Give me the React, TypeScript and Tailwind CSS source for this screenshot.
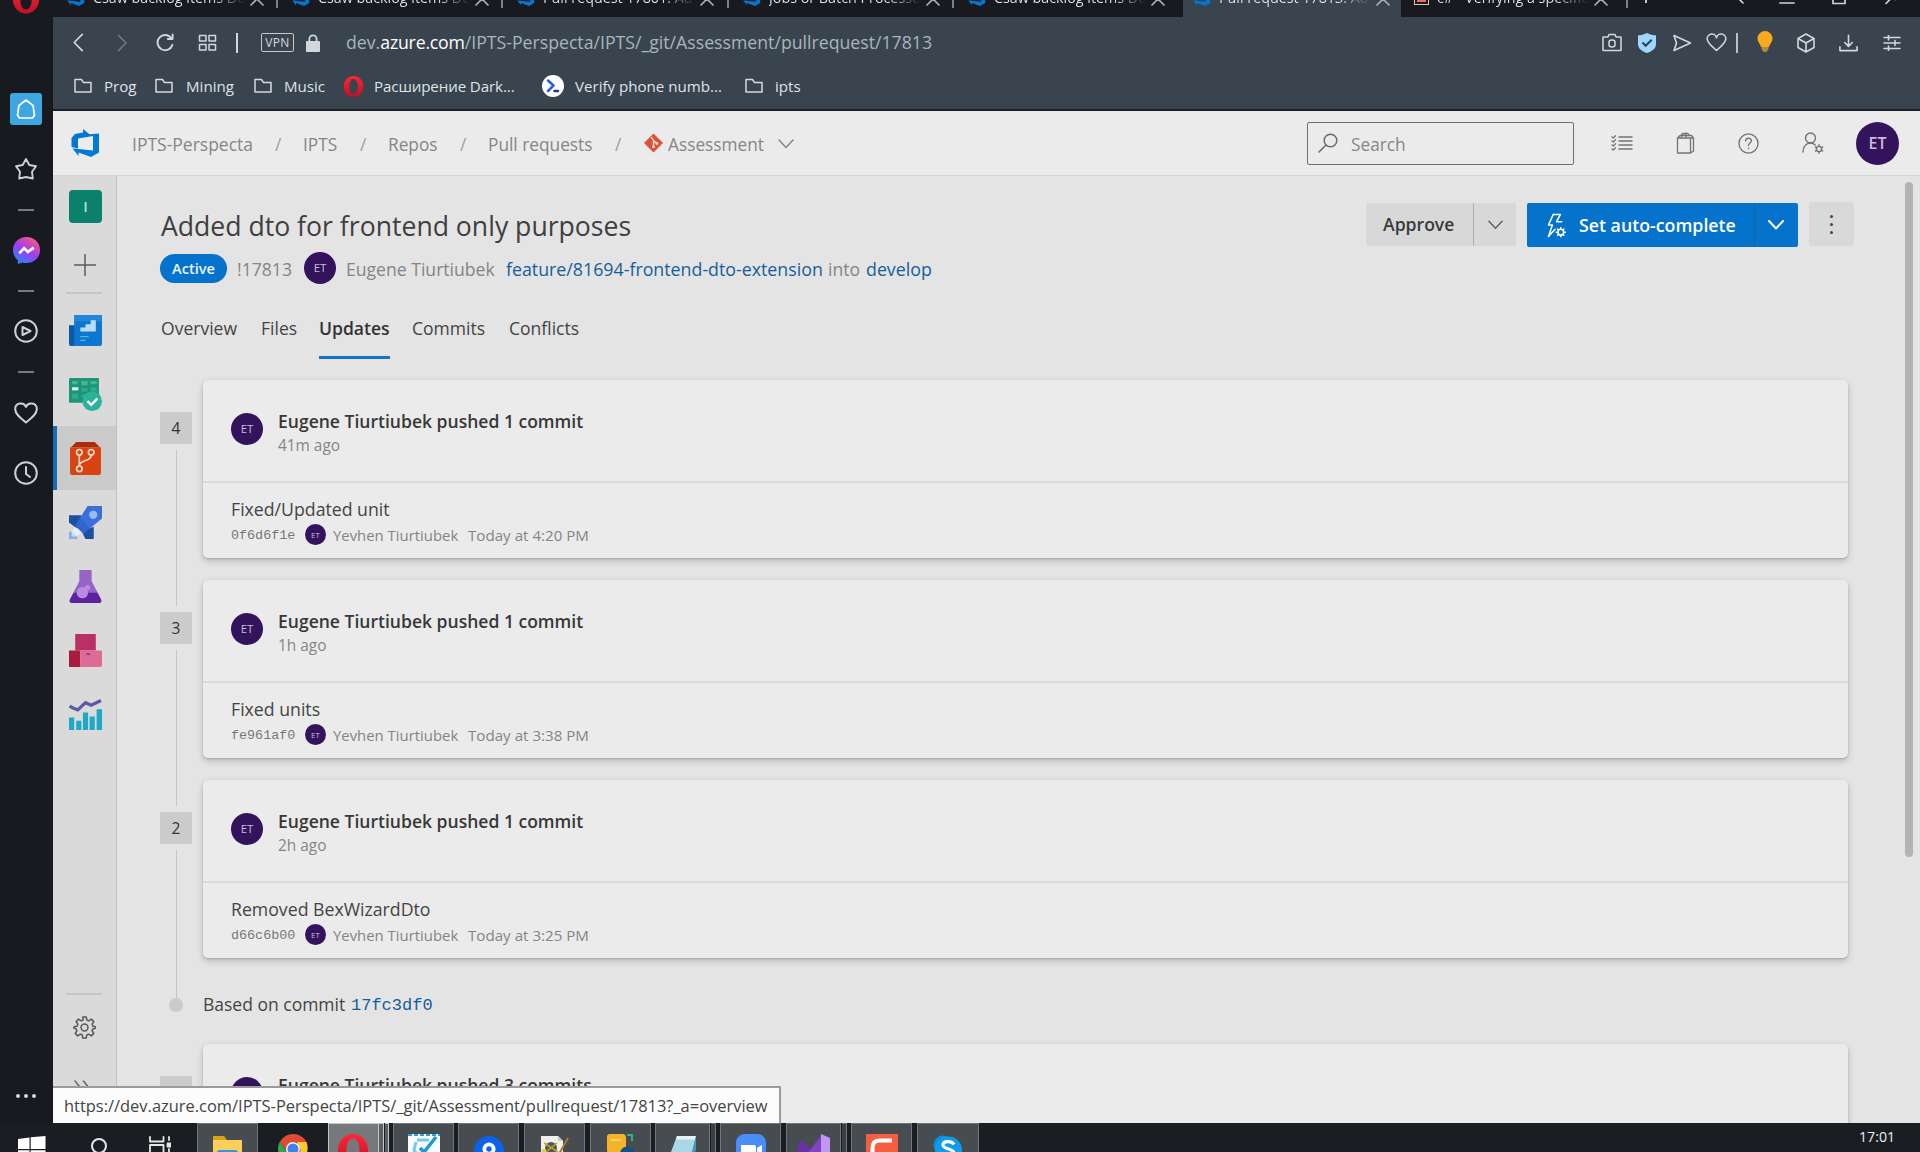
import type { ReactNode } from "react";

type IconProps = { className?: string };

const line = {
  fill: "none",
  stroke: "currentColor",
  strokeLinecap: "round" as const,
  strokeLinejoin: "round" as const,
};

function DevOpsLogo({ className = "" }: IconProps) {
  return (
    <svg viewBox="0 0 28 28" className={className}>
      <path
        fill="#0078d4"
        fillRule="evenodd"
        d="M27.5 4.5v19L19.500 28 7 23.500V27L1 19.500 4.500 19.800 21.500 21.500V7L6.500 9.500v10L0 18V9l3.500-4L11.500 3.500V0L18 5.200z"
      />
    </svg>
  );
}

function OperaRing({ className = "" }: IconProps) {
  return (
    <svg viewBox="0 0 32 32" className={className}>
      <defs>
        <linearGradient id="operaRed" x1="0" y1="0" x2="0" y2="1">
          <stop offset="0" stopColor="#ff2638" />
          <stop offset="1" stopColor="#c01024" />
        </linearGradient>
      </defs>
      <path
        fill="url(#operaRed)"
        fillRule="evenodd"
        d="M16 0c8.500 0 15 7 15 16s-6.500 16-15 16S1 25 1 16 7.500 0 16 0zm0 4.500c-4 0-6.500 5-6.500 11.500S12 27.500 16 27.500s6.500-5 6.500-11.500S20 4.500 16 4.500z"
      />
    </svg>
  );
}

function Chevron({ className = "", w = 1.5 }: IconProps & { w?: number }) {
  return (
    <svg viewBox="0 0 16 10" className={className} {...line} strokeWidth={w}>
      <path d="M1 1l7 7.500L15 1" />
    </svg>
  );
}

function Folder() {
  return (
    <svg viewBox="0 0 18 16" className="h-4 w-[18px] text-[#d5dade]" {...line} strokeWidth="1.500">
      <path d="M1 2.200V14h16V4.600H9.500L7.500 1.500H1z" />
    </svg>
  );
}

function Avatar({ className }: { className: string }) {
  return (
    <div className={`flex shrink-0 items-center justify-center rounded-full bg-[#33135c] text-[#c9bcd6] ${className}`}>
      ET
    </div>
  );
}

function CloseX() {
  return (
    <svg viewBox="0 0 14 14" className="h-[14px] w-[14px] shrink-0 text-[#aab0b6]" {...line} strokeWidth="1.700">
      <path d="M1 1l12 12M13 1L1 13" />
    </svg>
  );
}

const tabs = [
  { text: "Csaw backlog items De", kind: "devops", w: "w-[225px]" },
  { text: "Csaw backlog items De", kind: "devops", w: "w-[225px]" },
  { text: "Pull request 17801: Ad", kind: "devops", w: "w-[226px]" },
  { text: "Jobs or Batch Processe", kind: "devops", w: "w-[225px]" },
  { text: "Csaw backlog items De", kind: "devops", w: "w-[229px]" },
  { text: "Pull request 17813: Ad", kind: "active", w: "w-[218px]" },
  { text: "c# - Verifying a specific", kind: "stack", w: "w-[227px]" },
];

function TabStrip() {
  return (
    <div className="flex h-[17px] overflow-hidden bg-[#181a1f]">
      {tabs.map((t, i) => (
        <div key={i} className={`flex h-[17px] shrink-0 ${t.w} ${t.kind === "active" ? "bg-[#39444f] pl-[9px]" : "pl-[13px]"}`}>
          <div className="-mt-[12px] flex h-[22px] flex-1 items-start">
            {t.kind === "stack" ? (
              <div className="mt-[3px] flex h-[14px] w-[15px] flex-col justify-end gap-[2px] border border-t-0 border-[#d8c8b8] p-[2px]">
                <span className="h-[2px] bg-[#e2725b]" />
                <span className="h-[2px] bg-[#e2725b]" />
              </div>
            ) : (
              <DevOpsLogo className="h-[18px] w-[19px]" />
            )}
            <div className="ml-[8px] w-[152px] overflow-hidden bg-gradient-to-r from-[#e3e6e9] from-78% to-transparent bg-clip-text text-[14.300px] leading-[20px] font-medium whitespace-nowrap text-transparent">
              {t.text}
            </div>
            <div className="mt-[4px] ml-[5px]">
              <CloseX />
            </div>
          </div>
          {t.kind !== "active" && i !== 4 && <div className="h-[8px] w-[2px] bg-[#7d8287]" />}
        </div>
      ))}
      <div className="ml-[17px] h-[3px] w-[2px] bg-[#c4c8cc]" />
      <svg viewBox="0 0 160 17" className="ml-[89px] h-[17px] w-[160px] text-[#d0d4d8]" {...line} strokeWidth="1.700">
        <path d="M1 -3l6 6" />
        <path d="M44 3h14" />
        <path d="M97 -8v11.500h12V-8" />
        <path d="M150 3.500l7-7l7 7" />
      </svg>
    </div>
  );
}

function AddressBar() {
  return (
    <div className="flex h-[51px] items-center pl-[19px] text-[#d2d7db]">
      <svg viewBox="0 0 12 20" className="h-[19px] w-[12px]" {...line} strokeWidth="1.800">
        <path d="M10.500 1.500L2 10l8.500 8.500" />
      </svg>
      <svg viewBox="0 0 12 20" className="ml-[33px] h-[18px] w-[11px] text-[#6c7782]" {...line} strokeWidth="1.800">
        <path d="M1.500 1.500L10 10l-8.500 8.500" />
      </svg>
      <svg viewBox="0 0 20 20" className="ml-[27px] h-[19px] w-[20px]" {...line} strokeWidth="2">
        <path d="M17.800 12.500A8 8 0 1 1 16.500 5.200" />
        <path d="M18 1.500v4.800h-5" />
      </svg>
      <svg viewBox="0 0 18 17" className="ml-[23px] h-[17px] w-[19px]" {...line} strokeWidth="1.500">
        <path d="M1 1.500h6.500v5.500H1zM10.500 1.500H17v5.500h-6.500zM1 10.500h6.500V16H1zM10.500 10.500H17V16h-6.500z" />
      </svg>
      <div className="ml-[19px] h-[20px] w-[2px] bg-[#d2d7db]" />
      <div className="ml-[23px] flex h-[19px] w-[33px] items-center justify-center rounded-[2px] border-[1.500px] border-[#c3c9ce] text-[12px] leading-none tracking-[0.3px]">
        VPN
      </div>
      <svg viewBox="0 0 14 18" className="ml-[12px] h-[18px] w-[14px]" fill="currentColor">
        <path fillRule="evenodd" d="M2.500 7V5a4.500 4.500 0 0 1 9 0v2H13a1 1 0 0 1 1 1v9a1 1 0 0 1-1 1H1a1 1 0 0 1-1-1V8a1 1 0 0 1 1-1zM4.300 7h5.400V5a2.700 2.700 0 0 0-5.400 0z" />
      </svg>
      <div className="ml-[26px] flex-1 text-[17.700px] whitespace-nowrap text-[#aab4bd]">
        dev.<span className="tracking-[-0.200px] text-white">azure.com</span>/IPTS-Perspecta/IPTS/_git/Assessment/pullrequest/17813
      </div>
      <svg viewBox="0 0 20 18" className="h-[19px] w-[20px]" {...line} strokeWidth="1.500">
        <path d="M1 3.500h5L7 1h6l1 2.500h5V17H1z" />
        <rect x="7" y="6.500" width="6" height="7" rx="2.500" />
      </svg>
      <svg viewBox="0 0 18 20" className="ml-[16px] h-[20px] w-[18px]">
        <path fill="#9fd6fb" d="M9 0c3 1.800 6 2.200 9 2.300V11c0 5-4.500 7.500-9 9-4.500-1.500-9-4-9-9V2.300C3 2.200 6 1.800 9 0z" />
        <path d="M4.500 9.500l3.200 3.300 6-6" fill="none" stroke="#24445c" strokeWidth="2" />
      </svg>
      <svg viewBox="0 0 20 18" className="ml-[16px] h-[18px] w-[20px]" {...line} strokeWidth="1.600">
        <path d="M2 1.500L18.500 9 2 16.500 4.500 9z" />
      </svg>
      <svg viewBox="0 0 21 19" className="ml-[14px] h-[19px] w-[21px]" {...line} strokeWidth="1.600">
        <path d="M10.500 17.500C4 12 1.200 9 1.200 6a4.700 4.700 0 0 1 9.300-1.200A4.700 4.700 0 0 1 19.800 6c0 3-2.800 6-9.300 11.500z" />
      </svg>
      <div className="ml-[9px] h-[20px] w-[2px] bg-[#b9c0c6]" />
      <svg viewBox="0 0 16 21" className="-mt-[3px] ml-[19px] h-[21px] w-[16px]">
        <path fill="#f6aa1c" d="M8 0a7.500 7.500 0 0 1 7.500 7.500c0 3.500-2.500 5-3.500 8.500H4C3 12.500.5 11 .5 7.500A7.500 7.500 0 0 1 8 0z" />
        <path fill="#a98c4a" d="M4.500 16h7v2l-2 3h-3l-2-3z" />
      </svg>
      <svg viewBox="0 0 20 20" className="ml-[23px] h-[20px] w-[20px]" {...line} strokeWidth="1.600">
        <path d="M10 1l8 4.500v9L10 19l-8-4.500v-9zM2 5.500l8 4.500 8-4.500M10 10v9" />
      </svg>
      <svg viewBox="0 0 20 18" className="ml-[23px] h-[18px] w-[19px]" {...line} strokeWidth="1.700">
        <path d="M10 1v11M6 8.500l4 4 4-4M1 13v4h18v-4" />
      </svg>
      <svg viewBox="0 0 18 16" className="mr-[19px] ml-[25px] h-[16px] w-[18px]" {...line} strokeWidth="1.600">
        <path d="M1 2.500h16M1 8h16M1 13.500h16M5.500 0v5M12 5.500v5M5.500 11v5" />
      </svg>
    </div>
  );
}

function Bookmarks() {
  return (
    <div className="-mt-[2px] flex h-[40px] items-center pl-[21px] text-[15.100px] whitespace-nowrap text-[#dfe3e6]">
      <Folder />
      <span className="ml-[12px] w-[51px]">Prog</span>
      <Folder />
      <span className="ml-[13px] w-[68px]">Mining</span>
      <Folder />
      <span className="ml-[12px] w-[58px]">Music</span>
      <OperaRing className="h-[21px] w-[23px]" />
      <span className="ml-[9px] w-[168px] tracking-[-0.100px]">Расширение Dark...</span>
      <span className="flex h-[22px] w-[22px] items-center justify-center rounded-full bg-white">
        <svg viewBox="0 0 14 14" className="h-[14px] w-[14px]" {...line} strokeWidth="2.500">
          <path d="M2 1.500l5.500 5L2 12" stroke="#2a5fe0" />
          <path d="M8.500 12H12" stroke="#173b9c" />
        </svg>
      </span>
      <span className="ml-[11px] w-[170px]">Verify phone numb...</span>
      <Folder />
      <span className="ml-[12px]">ipts</span>
    </div>
  );
}

function OperaSidebar() {
  const dash = <div className="h-[2px] w-[16px] bg-[#777b80]" />;
  return (
    <aside className="flex w-[53px] shrink-0 flex-col items-center overflow-hidden bg-[#171a1f] pr-[1px] text-[#cdd1d5]">
      <div className="-mt-[17px] h-[33px] shrink-0">
        <OperaRing className="h-[33px] w-[28px]" />
      </div>
      <div className="mt-[77px] flex h-[32px] w-[32px] items-center justify-center rounded-[3px] bg-[#3ea6e2]">
        <svg viewBox="0 0 20 20" className="h-[20px] w-[20px] text-white" {...line} strokeWidth="1.700">
          <path d="M10 1l7 5.500 1.500 9.500-2 3h-13l-2-3L3 6.500z" />
        </svg>
      </div>
      <svg viewBox="0 0 24 24" className="mt-[32px] h-[24px] w-[24px]" {...line} strokeWidth="1.900">
        <path d="M12 2l3.300 6 6.700 1.200-4 5.500.8 6.800L12 20l-6.800 1.500.8-6.800-4-5.500L8.700 8z" />
      </svg>
      <div className="mt-[28px]">{dash}</div>
      <svg viewBox="0 0 28 28" className="mt-[26px] h-[27px] w-[27px]">
        <defs>
          <linearGradient id="msg" x1="0.200" y1="1" x2="0.800" y2="0">
            <stop offset="0" stopColor="#1c8bff" />
            <stop offset="0.500" stopColor="#a23cf0" />
            <stop offset="1" stopColor="#ff5c78" />
          </linearGradient>
        </defs>
        <path fill="url(#msg)" d="M14 0c8 0 14 5.800 14 13.500S22 27 14 27c-1.400 0-2.800-.2-4-.6L5 28v-4C2 21.500 0 18 0 13.500 0 5.800 6 0 14 0z" />
        <path d="M6.500 17l5-5.500 4 4 6-4.500" fill="none" stroke="#fff" strokeWidth="2.800" />
      </svg>
      <div className="mt-[26px]">{dash}</div>
      <svg viewBox="0 0 24 24" className="mt-[27px] h-[24px] w-[24px]" {...line} strokeWidth="2">
        <circle cx="12" cy="12" r="10.800" />
        <path d="M8.500 8l8 4-8 4z" />
      </svg>
      <div className="mt-[28px]">{dash}</div>
      <svg viewBox="0 0 24 22" className="mt-[29px] h-[22px] w-[24px]" {...line} strokeWidth="2">
        <path d="M12 20.500C5 15 1.200 11.500 1.200 7.200A5.600 5.600 0 0 1 12 5a5.600 5.600 0 0 1 10.800 2.200c0 4.300-3.800 7.800-10.800 13.300z" />
      </svg>
      <svg viewBox="0 0 24 24" className="mt-[37px] h-[24px] w-[24px]" {...line} strokeWidth="2">
        <circle cx="12" cy="12" r="10.800" />
        <path d="M12 6v7l4 3" />
      </svg>
      <div className="mt-[609px] flex gap-[4px]">
        <i className="h-[4px] w-[4px] rounded-full bg-[#d4d8dc]" />
        <i className="h-[4px] w-[4px] rounded-full bg-[#d4d8dc]" />
        <i className="h-[4px] w-[4px] rounded-full bg-[#d4d8dc]" />
      </div>
    </aside>
  );
}

function AzureHeader() {
  return (
    <header className="flex h-[65px] shrink-0 items-center border-b border-[#d4d4d4] bg-[#ebebeb] pl-[18px] text-[17.300px] whitespace-nowrap text-[#868686]">
      <DevOpsLogo className="h-[28px] w-[29px]" />
      <div className="mt-[3px] ml-[32px] flex items-center">
        <span className="w-[143px] text-[17.500px]">IPTS-Perspecta</span>
        <span className="w-[28px] text-[#a0a0a0]">/</span>
        <span className="w-[57px]">IPTS</span>
        <span className="w-[28px] text-[#a0a0a0]">/</span>
        <span className="w-[72px]">Repos</span>
        <span className="w-[28px] text-[#a0a0a0]">/</span>
        <span className="w-[127px]">Pull requests</span>
        <span className="w-[29px] text-[#a0a0a0]">/</span>
        <svg viewBox="0 0 20 20" className="mb-[3px] h-[20px] w-[19px]">
          <path d="M10 0.500L19.500 10 10 19.500.5 10z" fill="#dd5136" stroke="#dd5136" strokeLinejoin="round" />
          <path d="M7.500 4l2.500 3v7.500M10 7.500l3.500 3" fill="none" stroke="#f6e4df" strokeWidth="1.400" />
          <circle cx="10" cy="14" r="1.500" fill="#f6e4df" />
          <circle cx="13.500" cy="10.500" r="1.500" fill="#f6e4df" />
        </svg>
        <span className="ml-[5px] w-[110px]">Assessment</span>
        <Chevron className="-mt-[2px] h-[10px] w-[16px]" />
      </div>
      <div className="ml-auto flex h-[43px] w-[267px] items-center rounded-[2px] border-[1.500px] border-[#707070] pl-[10px]">
        <svg viewBox="0 0 20 20" className="h-[20px] w-[20px] text-[#6a6a6a]" {...line} strokeWidth="1.500">
          <circle cx="12.500" cy="7.500" r="6.300" />
          <path d="M8 12l-7 7" />
        </svg>
        <span className="mt-[3px] ml-[13px]">Search</span>
      </div>
      <svg viewBox="0 0 22 16" className="ml-[37px] h-[16px] w-[22px] text-[#747474]" {...line} strokeWidth="1.400">
        <path d="M8 2h13M8 6h13M8 10h13M8 14h13M1 2l1.300 1L4.500.8M1 6l1.300 1 2.200-2.200M1 10l1.300 1 2.200-2.200M1 14l1.300 1 2.200-2.200" />
      </svg>
      <svg viewBox="0 0 18 22" className="ml-[43px] h-[22px] w-[19px] text-[#747474]" {...line} strokeWidth="1.300">
        <path d="M1 6h13v15H1zM1 6l2.500-2.500H15l2 2.500v13l-3 2M14 6h3M5 6V3c0-2 4.500-2 4.500 0v3M8 1.600c2-.8 4.500-.2 4.500 1.900" />
      </svg>
      <svg viewBox="0 0 22 22" className="ml-[43px] h-[21px] w-[21px] text-[#747474]" {...line} strokeWidth="1.400">
        <circle cx="11" cy="11" r="10" />
        <path d="M8 8.500c0-4 6-4 6-.3 0 2.300-3 2.500-3 5M11 15.800v.4" />
      </svg>
      <svg viewBox="0 0 22 22" className="ml-[43px] h-[22px] w-[22px] text-[#747474]" {...line} strokeWidth="1.400">
        <circle cx="8.500" cy="6" r="5" />
        <path d="M1 20c0-5 3-9 7.500-9 2 0 3.500.8 4.700 2" />
        <circle cx="17" cy="17" r="2.600" />
        <path d="M17 12.800v1.400M17 19.800v1.400M13.300 15l1.300.7M19.500 18.300l1.300.7M13.300 19l1.300-.7M19.500 15.700l1.300-.7" />
      </svg>
      <Avatar className="mr-[21px] ml-[32px] h-[43px] w-[43px] text-[16px] font-semibold" />
    </header>
  );
}

function NavSlot({ active, children }: { active?: boolean; children: ReactNode }) {
  return (
    <div className={`flex h-[64px] w-full shrink-0 items-center border-l-4 pl-[12px] ${active ? "border-[#0f6fbd] bg-[#cacaca]" : "border-transparent"}`}>
      {children}
    </div>
  );
}

function AzureNav() {
  const s = "h-[33px] w-[33px]";
  return (
    <nav className="flex w-[64px] shrink-0 flex-col border-r border-[#c2c2c2] bg-[#dadada]">
      <div className="mt-[14px] ml-[16px] flex h-[33px] w-[33px] shrink-0 items-center justify-center rounded-[4px] bg-[#0b806b] text-[15px] font-semibold text-[#b8dcd4]">
        I
      </div>
      <svg viewBox="0 0 22 22" className="mt-[31px] ml-[21px] h-[22px] w-[22px] shrink-0 text-[#5c5c5c]" {...line} strokeWidth="1.500">
        <path d="M11 0v22M0 11h22" />
      </svg>
      <div className="mt-[16px] mb-[4px] ml-[13px] h-[2px] w-[36px] shrink-0 bg-[#c6c6c6]" />
      <NavSlot>
        <svg viewBox="0 0 32 32" className={s}>
          <path fill="#0c5aa6" d="M0 11h8v20H2a2 2 0 0 1-2-2z" />
          <path fill="#0f76ce" d="M5 1h27v28a2 2 0 0 1-2 2H3c2 0 2-1 2-3z" />
          <path fill="#2c93e6" d="M5 1h27v6H5z" opacity=".6" />
          <path fill="#b9dcf5" d="M11 17v-4h5v-3h5V6h5v11z" />
          <path stroke="#5fb0ec" strokeWidth="1.300" d="M11 22h8M11 25.500h5" />
        </svg>
      </NavSlot>
      <NavSlot>
        <svg viewBox="0 0 32 32" className={s}>
          <path fill="#1e9579" d="M1 0h28v24H1a1 1 0 0 1-1-1V1z" />
          <path fill="#6fd3b8" d="M3 3h5v3H3zM12 3h6v4h-6zM21 3h6v3h-6z" opacity=".5" />
          <path fill="#e5f7f2" d="M3 9h6v3H3z" />
          <path fill="#36b796" d="M12 10h6v3h-6zM21 9h6v4h-6zM3 15h6v5H3zM12 16h5v3h-5z" opacity=".7" />
          <circle cx="22.500" cy="22.500" r="9.500" fill="#2cb39c" />
          <path d="M18 22.500l3.500 3.500 6-6" fill="none" stroke="#fff" strokeWidth="2.300" />
        </svg>
      </NavSlot>
      <NavSlot active>
        <svg viewBox="0 0 32 32" className={s}>
          <path fill="#a92d0b" d="M7 0h18l5 5H2z" />
          <path fill="#d8430f" d="M1 5h30v25a2 2 0 0 1-2 2H3a2 2 0 0 1-2-2z" />
          <g fill="none" stroke="#f8ddd2" strokeWidth="1.600">
            <circle cx="10" cy="10" r="2.700" />
            <circle cx="21.500" cy="10" r="2.700" />
            <circle cx="10" cy="26" r="2.700" />
            <path d="M10 13v10M21.500 13c0 6-11 4-11.500 10" />
          </g>
        </svg>
      </NavSlot>
      <NavSlot>
        <svg viewBox="0 0 32 32" className={s}>
          <path fill="#1d4fa3" d="M0 9h12l-4 13-8-6zM12 24l12-4v12h-8z" />
          <path fill="#3b6fdb" d="M18 0h14v12L14 27l-8-8z" />
          <path fill="#2d5ecb" d="M6 19l8 8 6-5L11 11z" opacity=".6" />
          <circle cx="23.500" cy="8.500" r="4" fill="#9fb9f2" />
          <path fill="#e6effc" d="M6 20l6 6-4 3-5-4z" />
          <path fill="#86aef0" d="M0 25h2.500v4.500H8V32H0z" />
        </svg>
      </NavSlot>
      <NavSlot>
        <svg viewBox="0 0 32 32" className={s}>
          <path fill="#9465c6" d="M10 0h12v11l9 17c1 2 0 4-2 4H3c-2 0-3-2-2-4l9-17z" />
          <path fill="#5c23a0" d="M4.500 22h23L31 28.500c1 2 0 3.500-2 3.500H3c-2 0-3-1.500-2-3.500z" />
          <circle cx="13" cy="22" r="5.500" fill="#b98be0" />
          <circle cx="18" cy="17" r="2.500" fill="#b98be0" />
        </svg>
      </NavSlot>
      <NavSlot>
        <svg viewBox="0 0 32 32" className={s}>
          <path fill="#bb3064" d="M6 0h20v16H6z" />
          <path fill="#a81c3d" d="M0 16h11v16H1a1 1 0 0 1-1-1z" />
          <path fill="#dd6b98" d="M11 16h20a1 1 0 0 1 1 1v13a2 2 0 0 1-2 2H11z" />
          <path fill="#a33a68" d="M17 18.500h3.500v2H17z" />
        </svg>
      </NavSlot>
      <NavSlot>
        <svg viewBox="0 0 32 32" className={s}>
          <path d="M0.500 8l4 2 4 1.500L16 4.500l5.500 2.500L31 2.500" fill="none" stroke="#5b5aa5" strokeWidth="3.200" />
          <path fill="#1fa9c6" d="M0 19h5v12H0zM7 22h5v9H7zM13.500 14h5v17h-5zM20 18h5v13h-5zM26.800 11H32v20h-5.200z" />
        </svg>
      </NavSlot>
      <div className="mt-[247px] ml-[13px] h-[2px] w-[36px] shrink-0 bg-[#c6c6c6]" />
      <svg viewBox="0 0 24 24" className="mt-[21px] ml-[20px] h-[23px] w-[23px] shrink-0 text-[#5a5a5a]" {...line} strokeWidth="1.600">
        <circle cx="12" cy="12" r="3.600" />
        <path d="M10.200 1h3.600l.6 3.200 2 .9 2.700-1.800 2.600 2.600-1.800 2.700.9 2 3.200.6v1.600l-3.200.6-.9 2 1.800 2.700-2.600 2.600-2.700-1.800-2 .9-.6 3.200h-3.600l-.6-3.200-2-.9-2.700 1.800-2.600-2.600 1.800-2.700-.9-2L1 12.800v-1.600l3.200-.6.9-2-1.800-2.700 2.600-2.600 2.700 1.800 2-.9z" />
      </svg>
      <svg viewBox="0 0 17 17" className="mt-[41px] ml-[21px] h-[17px] w-[17px] shrink-0 text-[#6a6a6a]" {...line} strokeWidth="1.600">
        <path d="M1 1l6 7.500L1 16M9.500 1l6 7.500-6 7.500" />
      </svg>
    </nav>
  );
}

function Update({ n, title, ago, msg, hash, time }: { n?: string; title: string; ago?: string; msg?: string; hash?: string; time?: string }) {
  return (
    <div className="flex h-[200px] shrink-0">
      <div className="flex w-[43px] shrink-0 flex-col pt-[32px]">
        <div className="flex h-[32px] w-[32px] shrink-0 items-center justify-center rounded-[2px] bg-[#cbcbcb] pt-px text-[15.500px] text-[#333]">{n}</div>
        {msg && <div className="mt-[6px] ml-[16px] h-[156px] w-px shrink-0 bg-[#c6c6c6]" />}
      </div>
      <section className="h-[178px] w-[1645px] rounded-[5px] bg-[#ebebeb] shadow-[0_3px_7px_rgba(0,0,0,0.19),0_1px_2px_rgba(0,0,0,0.14)]">
        <div className="flex h-[103px] border-b-2 border-[#dadada] pt-[28px] pl-[28px]">
          <Avatar className="mt-[5px] h-[32px] w-[32px] text-[11.500px]" />
          <div className="ml-[15px]">
            <div className="h-[27px] text-[17.550px] leading-[27px] font-semibold text-[#383838]">{title}</div>
            <div className="h-[21px] text-[15.400px] leading-[21px] text-[#858585]">{ago}</div>
          </div>
        </div>
        {msg && (
          <div className="pt-[13px] pl-[28px]">
            <div className="h-[27px] text-[17.700px] leading-[27px] text-[#444]">{msg}</div>
            <div className="flex h-[23px] items-center text-[15px] text-[#858585]">
              <span className="mt-[3px] w-[74px] font-['Liberation_Mono','DejaVu_Sans_Mono',monospace] text-[13.400px] text-[#777]">{hash}</span>
              <Avatar className="h-[21px] w-[21px] text-[8px]" />
              <span className="mt-px ml-[7px] w-[135px] text-[14.900px]">Yevhen Tiurtiubek</span>
              <span className="mt-px text-[15.150px]">{time}</span>
            </div>
          </div>
        )}
      </section>
    </div>
  );
}

function PullRequest() {
  return (
    <main className="flex min-w-0 flex-1 flex-col overflow-hidden bg-[#e4e4e4] pl-[44px] whitespace-nowrap">
      <div className="flex h-[77px] shrink-0 pt-[27px]">
        <h1 className="mt-[4px] text-[26.600px] leading-[38px] text-[#3f3f3f]">Added dto for frontend only purposes</h1>
        <div className="mr-[51px] ml-auto flex h-[44px]">
          <div className="flex h-[43px] items-center rounded-[3px] bg-[#d8d8d8]">
            <span className="w-[107px] pl-[17px] text-[17.600px] font-semibold text-[#3a3a3a]">Approve</span>
            <span className="flex h-full w-[43px] items-center justify-center border-l border-[#aeaeae] text-[#5d5d5d]">
              <Chevron className="h-[10px] w-[15px]" />
            </span>
          </div>
          <div className="ml-[11px] flex h-[44px] w-[271px] items-center rounded-[2px] bg-[#0572cc] pl-[20px] text-white">
            <svg viewBox="0 0 20 25" className="h-[25px] w-[19px]" {...line} strokeWidth="1.600">
              <path d="M6.500 1H14l-4 7.500h5.500M6.500 1L1.500 12h4.200L1.500 24l7-7.500" />
              <circle cx="14.500" cy="19.500" r="3" />
              <path d="M14.500 14.800v1.500M14.500 22.800v1.500M9.800 19.500h1.500M17.800 19.500h1.500M11.200 16.200l1 1M16.800 21.800l1 1M11.200 22.800l1-1M16.800 17.200l1-1" />
            </svg>
            <span className="ml-[13px] w-[175px] text-[17.750px] font-semibold">Set auto-complete</span>
            <span className="flex h-full w-[43px] items-center justify-center border-l border-[#1b62a5]">
              <Chevron className="h-[10px] w-[16px]" w={2} />
            </span>
          </div>
          <div className="-mt-px ml-[11px] flex h-[44px] w-[45px] flex-col items-center justify-center gap-[5px] rounded-[3px] bg-[#d9d9d9]">
            <i className="h-[3px] w-[3px] rounded-full bg-[#444]" />
            <i className="h-[3px] w-[3px] rounded-full bg-[#444]" />
            <i className="h-[3px] w-[3px] rounded-full bg-[#444]" />
          </div>
        </div>
      </div>
      <div className="-mt-px -ml-px flex h-[32px] shrink-0 items-center text-[17.600px] text-[#858585]">
        <span className="flex h-[29px] w-[67px] items-center justify-center rounded-full bg-[#0572cc] pt-px text-[14.600px] font-semibold text-[#eef5fb]">Active</span>
        <span className="mt-[2px] ml-[10px] w-[67px]">!17813</span>
        <Avatar className="h-[32px] w-[32px] text-[11.500px]" />
        <span className="mt-[2px] ml-[10px] w-[160px]">Eugene Tiurtiubek</span>
        <span className="mt-[2px] w-[322px] text-[17.800px] text-[#15609c]">feature/81694-frontend-dto-extension</span>
        <span className="mt-[2px] w-[38px]">into</span>
        <span className="mt-[2px] text-[17.800px] text-[#15609c]">develop</span>
      </div>
      <div className="mt-[22px] flex h-[53px] shrink-0 text-[17.550px] leading-[44px] text-[#444]">
        <span className="w-[100px]">Overview</span>
        <span className="w-[58px]">Files</span>
        <span className="mr-[22px] h-[53px] w-[71px] border-b-[3px] border-[#1573c4] font-semibold text-[#333]">Updates</span>
        <span className="w-[97px]">Commits</span>
        <span>Conflicts</span>
      </div>
      <div className="mt-[21px] -ml-px flex flex-col">
        <Update n="4" title="Eugene Tiurtiubek pushed 1 commit" ago="41m ago" msg="Fixed/Updated unit" hash="0f6d6f1e" time="Today at 4:20 PM" />
        <Update n="3" title="Eugene Tiurtiubek pushed 1 commit" ago="1h ago" msg="Fixed units" hash="fe961af0" time="Today at 3:38 PM" />
        <Update n="2" title="Eugene Tiurtiubek pushed 1 commit" ago="2h ago" msg="Removed BexWizardDto" hash="d66c6b00" time="Today at 3:25 PM" />
        <div className="flex h-[64px] shrink-0 items-start pt-[11px] text-[17.500px] text-[#444]">
          <i className="mt-[7px] ml-[9px] h-[14px] w-[14px] rounded-full bg-[#cbcbcb]" />
          <span className="ml-[20px] w-[148px] leading-[27px]">Based on commit</span>
          <span className="font-['Liberation_Mono','DejaVu_Sans_Mono',monospace] text-[17px] leading-[30px] text-[#15609c]">17fc3df0</span>
        </div>
        <Update title="Eugene Tiurtiubek pushed 3 commits" />
      </div>
    </main>
  );
}

function Tile({ w, ml = "ml-[4px]", lit, children }: { w: string; ml?: string; lit?: boolean; children: ReactNode }) {
  return (
    <div className={`flex h-[29px] shrink-0 justify-center border border-b-0 pt-[10px] ${w} ${ml} ${lit ? "border-[#c4c6c8] bg-[#75797c]" : "border-[#70757a] bg-[#474c50]"}`}>
      {children}
    </div>
  );
}

function Taskbar() {
  const s = "h-[32px] w-[32px] shrink-0";
  return (
    <footer className="flex h-[29px] overflow-hidden bg-[#1a1e23]">
      <svg viewBox="0 0 28 28" className="mt-[13px] ml-[18px] h-[28px] w-[28px] shrink-0 text-white" fill="currentColor">
        <path d="M0 3l11.500-1.500V13H0zM12.700 1.300L27.500 0v13H12.700zM0 14.200h11.500V26L0 24.500zM12.700 14.200h14.800V28l-14.800-2z" />
      </svg>
      <svg viewBox="0 0 18 24" className="mt-[15px] ml-[44px] h-[24px] w-[18px] shrink-0 text-[#e4e6e8]" {...line} strokeWidth="2">
        <circle cx="9" cy="8" r="7" />
        <path d="M5 14l-4 6" />
      </svg>
      <svg viewBox="0 0 22 24" className="mt-[13px] ml-[41px] h-[24px] w-[22px] shrink-0 text-[#e4e6e8]" {...line} strokeWidth="1.800">
        <path d="M1 1v4.500h13.500V1M1 24V9h13.500v15M20 1v3M20 13v10" />
        <path d="M18.500 7.500h3v3h-3z" fill="currentColor" />
      </svg>
      <Tile w="w-[61px]" ml="ml-[26px]">
        <svg viewBox="0 0 30 30" className="mt-[2px] h-[30px] w-[30px]">
          <path fill="#d9a21c" d="M0 0h11l3 4H0z" />
          <path fill="#fbcf5b" d="M0 4h29v26H0z" />
          <path fill="#3e92d9" d="M4 17c0-2 1-3 3-3h15c2 0 3 1 3 3v13H4z" />
        </svg>
      </Tile>
      <div className="flex w-[70px] shrink-0 justify-center pt-[11px]">
        <svg viewBox="0 0 30 30" className="h-[30px] w-[30px]">
          <path fill="#e24a32" d="M15 0c6 0 11 3 13.500 8H15L9 18 2 7.500C5 3 9.500 0 15 0z" />
          <path fill="#35a350" d="M2 7.500L10 20l2 10C5 28 0 22 0 15c0-3 .7-5.300 2-7.500z" />
          <path fill="#fbc92d" d="M28.500 8c3 7 0 18-10 22l4-14-4-8z" />
          <circle cx="15" cy="15" r="7" fill="#f4f6f8" />
          <circle cx="15" cy="15" r="5.500" fill="#3f80ee" />
        </svg>
      </div>
      <Tile w="w-[51px]" ml="ml-0" lit>
        <OperaRing className="-ml-[2px] h-[32px] w-[32px] shrink-0" />
      </Tile>
      <div className="h-[29px] w-[5px] shrink-0 border-t border-r border-[#c4c6c8] bg-[#5b6063]" />
      <div className="ml-px h-[29px] w-[4px] shrink-0 border-t border-r border-[#c4c6c8] bg-[#5b6063]" />
      <Tile w="w-[61px]">
        <svg viewBox="0 0 32 32" className={s}>
          <path fill="#f5fbfe" d="M0 0h32v32H0z" />
          <path d="M0 1h32" stroke="#2b9fd8" strokeWidth="2" strokeDasharray="4 2" />
          <path d="M9 6h12M8 8l-2 8 7 10" fill="none" stroke="#7cc6ea" strokeWidth="3" />
          <path d="M12 14l4 4L28 3" fill="none" stroke="#2099d6" strokeWidth="3.500" />
        </svg>
      </Tile>
      <Tile w="w-[61px]">
        <svg viewBox="0 0 32 32" className={s}>
          <circle cx="16" cy="17" r="15" fill="#0a63ea" />
          <circle cx="16" cy="15" r="6.500" fill="#fff" />
          <circle cx="16" cy="15" r="2.700" fill="#0a63ea" />
        </svg>
      </Tile>
      <Tile w="w-[61px]" ml="ml-[5px]">
        <svg viewBox="0 0 32 32" className={s}>
          <path fill="#eff0ec" d="M2 2h17l5 5v25H2z" />
          <path fill="#c9cbc8" d="M19 2l5 5h-5z" />
          <circle cx="12" cy="14" r="6" fill="#55594c" />
          <path d="M5 9l14 9M7 18l11-9" stroke="#b5a63a" strokeWidth="1.500" />
          <path fill="#e2cf3c" d="M3 15h4v6H3z" />
          <path d="M29 4L20 20" stroke="#a67a33" strokeWidth="2" />
        </svg>
      </Tile>
      <Tile w="w-[61px]" ml="ml-[5px]">
        <svg viewBox="0 0 32 32" className={s}>
          <path fill="#f4b429" d="M5 0h12c3 0 4 1 4 4v10l-6 6H5c-2 0-3-2-3-4V3c0-2 1-3 3-3z" />
          <path fill="#f9cf63" d="M6 5h10v2H6z" />
          <path fill="#154f86" d="M15 20c0-5 4-8 8-7l6 2v17H12z" />
          <path d="M22 1h5v6" fill="none" stroke="#2bb38a" strokeWidth="2" />
        </svg>
      </Tile>
      <Tile w="w-[55px]">
        <svg viewBox="0 0 32 32" className={s}>
          <path fill="#64aac2" d="M10 2L0 32h23l6-30z" />
          <path fill="#a9d8e8" d="M10 2l19 0-4 16H4z" />
          <path fill="#e4f4f8" d="M10 2h19l-1 3.500H9z" />
          <path fill="#4f93ad" d="M25 18l4-16v14l-6 16z" />
        </svg>
      </Tile>
      <div className="ml-px h-[29px] w-[5px] shrink-0 border-t border-r border-[#70757a] bg-[#3a3f44]" />
      <Tile w="w-[61px]">
        <svg viewBox="0 0 32 32" className={s}>
          <path fill="#4a8df6" d="M10 0h12c6 0 9 4 9 9v14H1V9c0-5 3-9 9-9z" />
          <path fill="#fff" d="M6 11h13c1.500 0 2 1 2 2v13H6zM22 14l5-3v12l-5-3z" />
        </svg>
      </Tile>
      <Tile w="w-[55px]" ml="ml-[5px]">
        <svg viewBox="0 0 32 32" className={s}>
          <path fill="#6a30a8" d="M0 9l4-2 9 8 11-15v10L10 26 0 18z" />
          <path fill="#8143c2" d="M13 15L24 0v32L8 20z" />
          <path fill="#c297f4" d="M23 0l9 4v24l-9 4z" />
        </svg>
      </Tile>
      <div className="ml-px h-[29px] w-[5px] shrink-0 border-t border-r border-[#70757a] bg-[#3a3f44]" />
      <Tile w="w-[61px]">
        <svg viewBox="0 0 32 32" className={s}>
          <path fill="#f45f41" d="M0 0h32v32H0z" />
          <path d="M26 6.500H13c-5 0-6.500 3-6.500 8V32" fill="none" stroke="#fff" strokeWidth="4" />
        </svg>
      </Tile>
      <Tile w="w-[62px]" ml="ml-[5px]">
        <svg viewBox="0 0 32 32" className={s}>
          <circle cx="11" cy="11" r="9.500" fill="#0a8fe0" />
          <circle cx="16.500" cy="16" r="13.500" fill="#109ceb" />
          <path d="M22 10.500c-2-4-11-4-11 .5s11 3.500 11 8-9 5-11.500 1" fill="none" stroke="#fff" strokeWidth="3.200" />
        </svg>
      </Tile>
      <span className="mr-[25px] ml-auto h-[27px] text-[14.100px] leading-[27px] text-[#eceef0]">17:01</span>
    </footer>
  );
}

export default function App() {
  return (
    <div className="relative flex h-[1152px] w-[1920px] flex-col overflow-hidden bg-[#171a1f] font-['Open_Sans','Noto_Sans',sans-serif]">
      <div className="flex h-[1123px]">
        <OperaSidebar />
        <div className="flex w-[1867px] flex-col">
          <TabStrip />
          <div className="h-[94px] shrink-0 border-b-2 border-[#1b2026] bg-[#39444f]">
            <AddressBar />
            <Bookmarks />
          </div>
          <AzureHeader />
          <div className="flex h-[947px] overflow-hidden bg-[#e4e4e4]">
            <AzureNav />
            <PullRequest />
            <div className="w-[15px] shrink-0 pt-[6px]">
              <div className="h-[675px] w-[8px] rounded-full bg-[#b3b3b3]" />
            </div>
          </div>
        </div>
      </div>
      <Taskbar />
      <div className="absolute top-[1086px] left-[53px] flex h-[37px] w-[728px] items-center border-t-2 border-r-2 border-[#9b9b9b] bg-[#fcfcfc] pt-[2px] pl-[11px] text-[16.450px] whitespace-nowrap text-[#444]">
        https://dev.azure.com/IPTS-Perspecta/IPTS/_git/Assessment/pullrequest/17813?_a=overview
      </div>
    </div>
  );
}
